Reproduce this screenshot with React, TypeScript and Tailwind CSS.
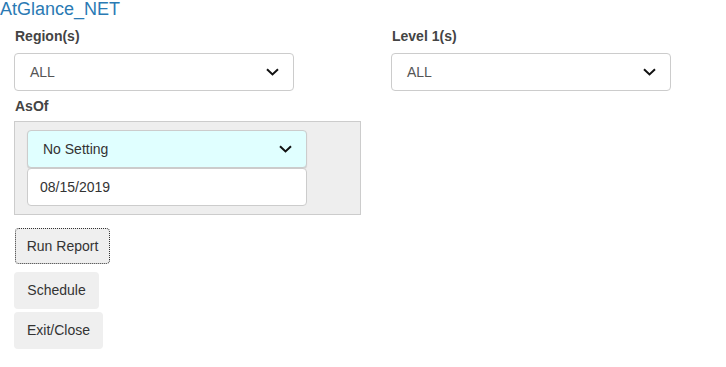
const font = { fontFamily: '"Liberation Sans", Arial, sans-serif' };

function Chevron() {
  return (
    <svg width="13" height="8" viewBox="0 0 13 8" className="shrink-0">
      <path d="M1 1.2 L6.5 6.4 L12 1.2" fill="none" stroke="#111" strokeWidth="2" />
    </svg>
  );
}

function Select({ value, className = "" }: { value: string; className?: string }) {
  return (
    <div
      className={`flex h-[38px] w-[280px] items-center justify-between rounded border border-[#ccc] pl-[15px] pr-[14px] text-[14px] text-[#555] ${className}`}
    >
      <span>{value}</span>
      <Chevron />
    </div>
  );
}

function Field({ label, children }: { label: string; children: React.ReactNode }) {
  return (
    <div className="flex flex-col">
      <div className="mb-[7px] h-5 pl-px text-[14px] font-bold leading-5 text-[#444]">{label}</div>
      {children}
    </div>
  );
}

export default function App() {
  return (
    <div className="h-[367px] w-[726px] bg-white" style={font}>
      <div className="text-[18px] leading-[18px] text-[#2a7ab4]">AtGlance_NET</div>

      <div className="mt-[8px] flex gap-[97px] pl-[14px]">
        <Field label="Region(s)">
          <Select value="ALL" />
        </Field>
        <Field label="Level 1(s)">
          <Select value="ALL" />
        </Field>
      </div>

      <div className="mt-[5px] pl-[14px]">
        <div className="mb-[5px] h-5 pl-px text-[14px] font-bold leading-5 text-[#444]">AsOf</div>
        <div className="flex w-[347px] flex-col border border-[#ccc] bg-[#eee] pb-[8px] pl-[12px] pt-[8px]">
          <Select value="No Setting" className="bg-[#e0ffff] !text-[#333] shadow-[0_1px_1px_rgba(0,0,0,0.12)]" />
          <div className="flex h-[38px] w-[280px] items-center rounded border border-[#ccc] bg-white pl-[12px] text-[14px] text-[#333]">
            08/15/2019
          </div>
        </div>
      </div>

      <div className="mt-[13px] flex flex-col items-start gap-[3px] pl-[14px]">
        <button
          type="button"
          className="ml-px h-[36px] w-[95px] rounded-sm border border-dotted border-[#333] bg-[#efefef] text-[14px] text-[#333]"
        >
          Run Report
        </button>
        <button
          type="button"
          className="mt-[5px] h-[37px] w-[85px] rounded bg-[#efefef] text-[14px] text-[#333]"
        >
          Schedule
        </button>
        <button type="button" className="h-[37px] w-[89px] rounded bg-[#efefef] text-[14px] text-[#333]">
          Exit/Close
        </button>
      </div>
    </div>
  );
}
